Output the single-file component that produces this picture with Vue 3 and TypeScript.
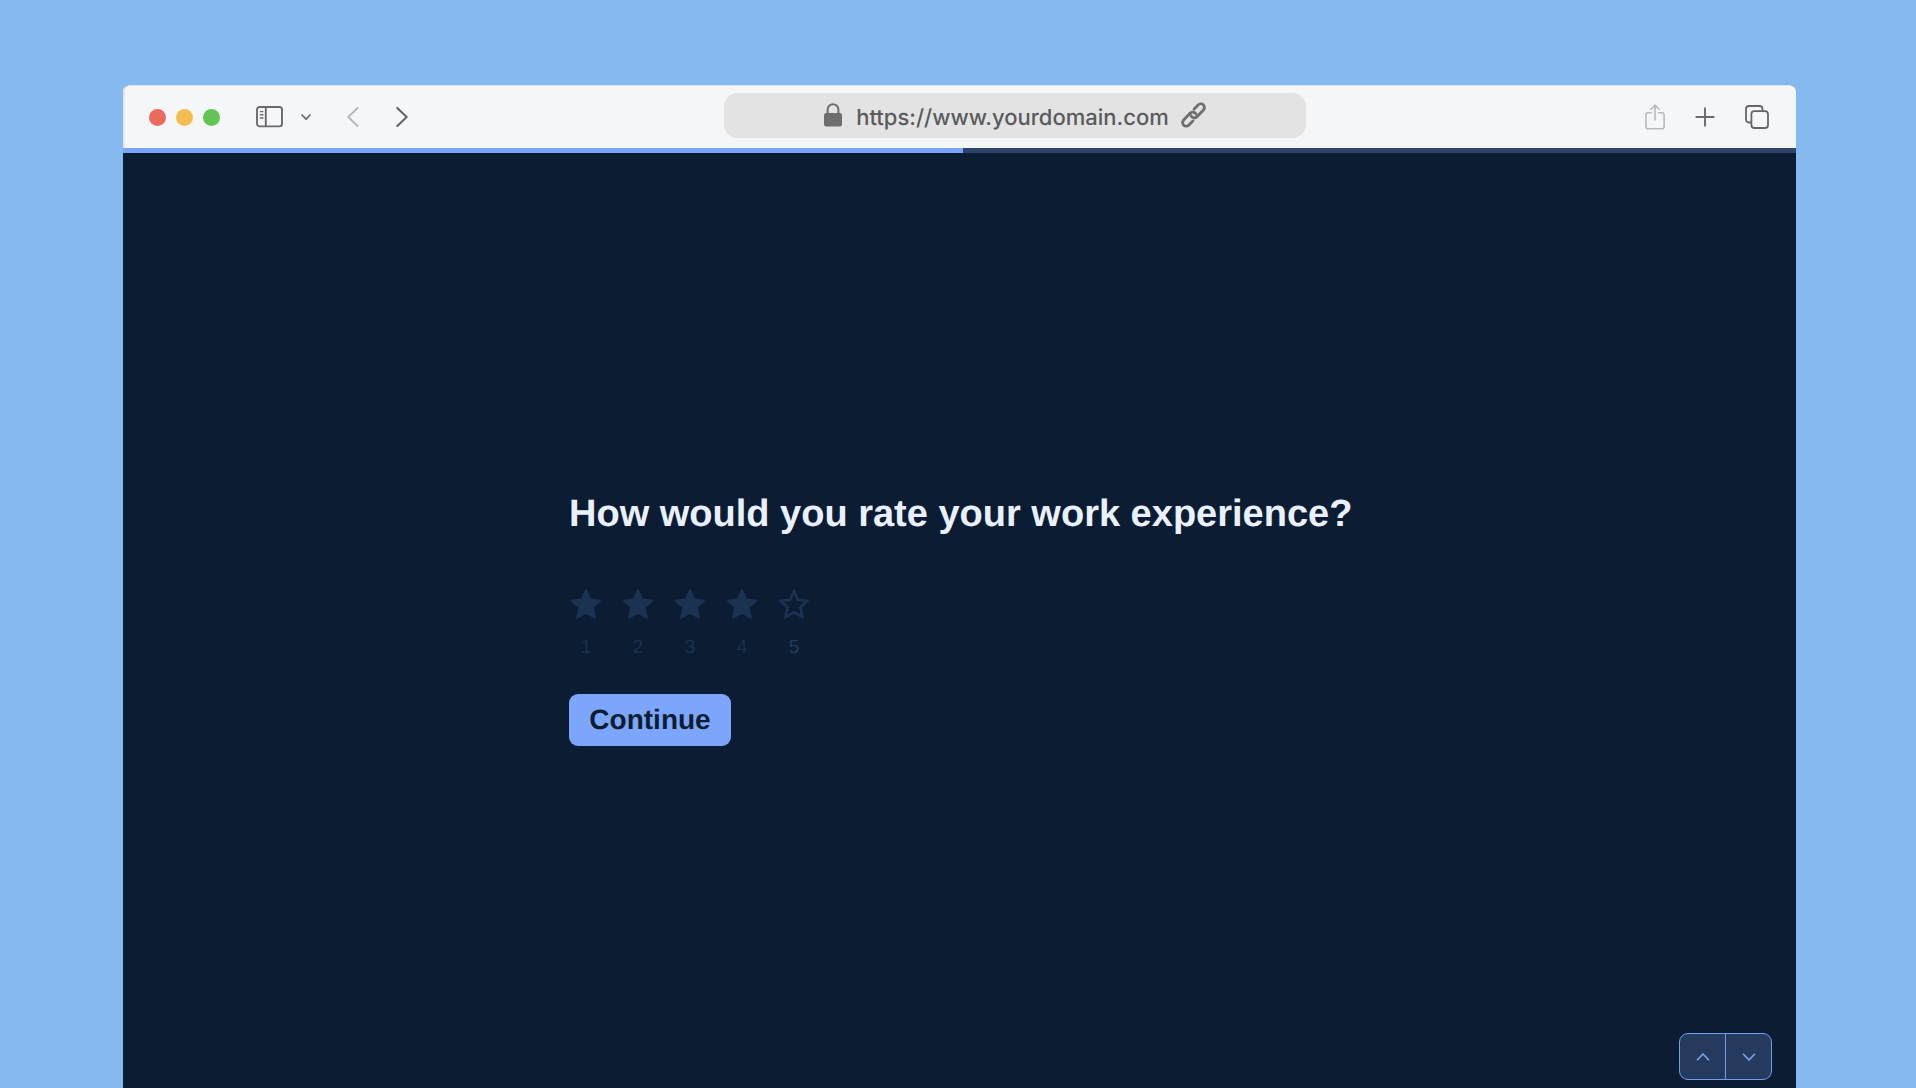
<script setup lang="ts">
import { ref } from 'vue'

const url = ref('https://www.yourdomain.com')
const rating = ref(4)
const steps = [1, 2, 3, 4, 5]
const progress = 50.2
const lights = ['close', 'minimize', 'maximize']
</script>

<template>
  <main class="page">
    <div class="window">
      <header class="toolbar">
        <div class="group left">
          <div class="lights">
            <button v-for="l in lights" :key="l" type="button" :class="['light', l]" :aria-label="l"></button>
          </div>
          <button type="button" class="tool sidebar" aria-label="Sidebar">
            <svg width="28" height="22" viewBox="0 0 28 22" fill="none" stroke="#6b6b6d" stroke-width="1.9">
              <rect x="1" y="1" width="25" height="19.4" rx="2.6" />
              <path d="M9.800 1v19.5" />
              <path d="M3.8 5.6h3.600M3.8 8.8h3.600M3.8 12h3.600" stroke-width="1.4" />
            </svg>
          </button>
          <button type="button" class="tool menu" aria-label="Sidebar options">
            <svg width="10" height="8" viewBox="0 0 10 8" fill="none" stroke="#6b6b6d" stroke-width="1.7" stroke-linecap="round" stroke-linejoin="round">
              <path d="M1 2l4 4.2L9 2" />
            </svg>
          </button>
          <button type="button" class="tool back" aria-label="Back">
            <svg width="12" height="20" viewBox="0 0 12 20" fill="none" stroke="#b5b6b7" stroke-width="1.8" stroke-linecap="round" stroke-linejoin="round">
              <path d="M10.6 1L1.2 10l9.4 9" />
            </svg>
          </button>
          <button type="button" class="tool" aria-label="Forward">
            <svg width="12" height="20" viewBox="0 0 12 20" fill="none" stroke="#626264" stroke-width="2" stroke-linecap="round" stroke-linejoin="round">
              <path d="M1.3 1l9.4 9-9.4 9" />
            </svg>
          </button>
        </div>

        <label class="address">
          <svg width="18" height="24" viewBox="0 0 18 24" aria-hidden="true">
            <rect x="0" y="10" width="18" height="13.4" rx="2.2" fill="#6d6e70" />
            <path d="M3.6 11V6.600a5.400 5.400 0 0 1 10.800 0V11" fill="none" stroke="#6d6e70" stroke-width="2" />
          </svg>
          <input v-model="url" type="text" class="url" size="26" aria-label="Address" />
          <svg width="25" height="26" viewBox="0 0 25 26" fill="none" stroke="#6d6e70" stroke-width="2.8" stroke-linecap="round" aria-hidden="true">
            <g transform="translate(12.5 13) rotate(-46)">
              <path d="M-4.600 3.700H-10.400a3.700 3.700 0 0 1 0-7.400H-1.200a3.700 3.700 0 0 1 3.500 4.900" />
              <path d="M4.600-3.700H10.400a3.700 3.700 0 0 1 0 7.400H1.200a3.700 3.700 0 0 1-3.500-4.900" />
            </g>
          </svg>
        </label>

        <div class="group right">
          <button type="button" class="tool" aria-label="Share">
            <svg width="20" height="26" viewBox="0 0 20 26" fill="none" stroke="#b9babb" stroke-width="1.6" stroke-linecap="round" stroke-linejoin="round">
              <path d="M6.400 8.700H3.200A2.300 2.300 0 0 0 .9 11v11.400a2.300 2.300 0 0 0 2.300 2.300h13.600a2.300 2.300 0 0 0 2.300-2.300V11a2.300 2.300 0 0 0-2.300-2.300h-3.200" />
              <path d="M10 16V1.200M5.900 5.200L10 1.100l4.100 4.100" />
            </svg>
          </button>
          <button type="button" class="tool" aria-label="New tab">
            <svg width="20" height="20" viewBox="0 0 20 20" fill="none" stroke="#6b6b6d" stroke-width="1.9" stroke-linecap="round">
              <path d="M10 1.300v17.400M1.300 10h17.400" />
            </svg>
          </button>
          <button type="button" class="tool" aria-label="Tab overview">
            <svg width="24" height="24" viewBox="0 0 24 24" fill="none" stroke="#666668" stroke-width="1.8">
              <path d="M6.400 17.500H4A3 3 0 0 1 1 14.500V4a3 3 0 0 1 3-3h10.500a3 3 0 0 1 3 3v2" />
              <rect x="6.400" y="6.200" width="16.600" height="16.800" rx="3" />
            </svg>
          </button>
        </div>
      </header>

      <div class="track" role="progressbar" :aria-valuenow="progress" aria-label="Survey progress">
        <div class="bar" :style="{ width: progress + '%' }"></div>
      </div>

      <form class="survey" @submit.prevent>
        <h1>How would you rate your work experience?</h1>
        <div class="stars" role="radiogroup" aria-label="Rating">
          <label v-for="n in steps" :key="n" class="star" :class="{ open: n > rating }">
            <input v-model="rating" type="radio" name="rating" :value="n" />
            <svg width="32" height="32" viewBox="0 0 32 32" aria-hidden="true">
              <path d="M16 2.700L19.900 11.900L29.600 12.800L22.300 19.300L24.600 29.300L16 24.200L7.400 29.300L9.700 19.300L2.400 12.800L12.100 11.900Z" />
            </svg>
            <span>{{ n }}</span>
          </label>
        </div>
        <button type="submit" class="continue">Continue</button>
      </form>

      <nav class="pager" aria-label="Questions">
        <button type="button" aria-label="Previous question">
          <svg width="14" height="8" viewBox="0 0 14 8"><path d="M1 7.200L7 1l6 6.200" /></svg>
        </button>
        <button type="button" aria-label="Next question">
          <svg width="14" height="8" viewBox="0 0 14 8"><path d="M1 .8L7 7l6-6.200" /></svg>
        </button>
      </nav>
    </div>
  </main>
</template>

<style>
body {
  background: #87b9f1;
}
</style>

<style scoped>
* {
  box-sizing: border-box;
}

.page {
  display: flex;
  min-height: 100vh;
  padding: 85px 120px 0 123px;
  background: #87b9f1;
  font-family: "Liberation Sans", Arial, sans-serif;
  text-rendering: geometricPrecision;
}

.window {
  display: flex;
  flex: 1;
  flex-direction: column;
  background: #0c1c32;
  border-radius: 6px 6px 0 0;
}

button {
  padding: 0;
  border: 0;
  background: none;
  font-family: inherit;
  text-rendering: inherit;
}

svg {
  display: block;
  flex: none;
}

.toolbar {
  display: grid;
  grid-template-columns: 601fr 582fr 490fr;
  align-items: center;
  height: 63px;
  background: #f5f6f8;
  border-top: 1px solid #d5e3f5;
  border-radius: 6px 6px 0 0;
  box-shadow: inset 2px 0 0 #e3e5e8;
}

.group {
  display: flex;
  align-items: center;
}

.left {
  padding-left: 26px;
}

.right {
  justify-content: flex-end;
  gap: 30px;
  padding-right: 27px;
}

.lights {
  display: flex;
  gap: 10px;
  margin-right: 36px;
}

.light {
  width: 17px;
  height: 17px;
  border-radius: 50%;
}

.close {
  background: #ea6a5e;
}

.minimize {
  background: #f3be4f;
}

.maximize {
  background: #60c554;
}

.sidebar {
  margin-right: 17px;
}

.menu {
  margin-right: 36px;
}

.back {
  margin-right: 37px;
}

.address {
  display: flex;
  align-items: center;
  justify-content: center;
  gap: 12px;
  height: 45px;
  margin-bottom: 4px;
  background: #e3e3e3;
  border-radius: 14px;
}

.url {
  width: auto;
  height: 32px;
  padding: 6px 0 0 2px;
  border: 0;
  outline: 0;
  background: none;
  color: #5a5b5c;
  font-family: Inter, sans-serif;
  font-size: 22px;
  font-weight: 500;
  text-rendering: inherit;
  field-sizing: content;
}

.track {
  height: 5px;
  background: #2e446b;
}

.bar {
  height: 100%;
  background: #79a3f8;
}

.survey {
  width: 781px;
  max-width: 100%;
  margin: 0 auto;
  padding-top: 337px;
}

h1 {
  margin: 0;
  color: #eaf1fe;
  font-size: 38px;
  font-weight: 700;
  line-height: 48px;
  white-space: nowrap;
}

.stars {
  display: flex;
  gap: 20px;
  margin-top: 50px;
  padding-left: 1px;
}

.star {
  position: relative;
  display: flex;
  flex-direction: column;
  align-items: center;
  gap: 16px;
  width: 32px;
  color: #19304f;
  font-size: 19px;
  line-height: 24px;
}

.star input {
  position: absolute;
  width: 32px;
  height: 32px;
  margin: 0;
  opacity: 0;
}

.star path {
  fill: #1b3252;
  stroke: #1b3252;
  stroke-width: 2.6;
  stroke-linejoin: round;
}

.star.open {
  color: #203c63;
}

.star.open path {
  fill: none;
}

.continue {
  width: 162px;
  height: 52px;
  margin-top: 34px;
  border-radius: 9px;
  background: #7ba6fa;
  color: #0c1c32;
  font-size: 28px;
  font-weight: 700;
}

.pager {
  display: flex;
  width: 93px;
  height: 47px;
  margin: auto 24px 8px auto;
  border: 1px solid #719df0;
  border-radius: 9px;
  background: #263a5e;
}

.pager button {
  display: flex;
  flex: 1;
  align-items: center;
  justify-content: center;
}

.pager button + button {
  border-left: 1px solid #719df0;
}

.pager path {
  fill: none;
  stroke: #79a3f8;
  stroke-width: 1.6;
}
</style>
